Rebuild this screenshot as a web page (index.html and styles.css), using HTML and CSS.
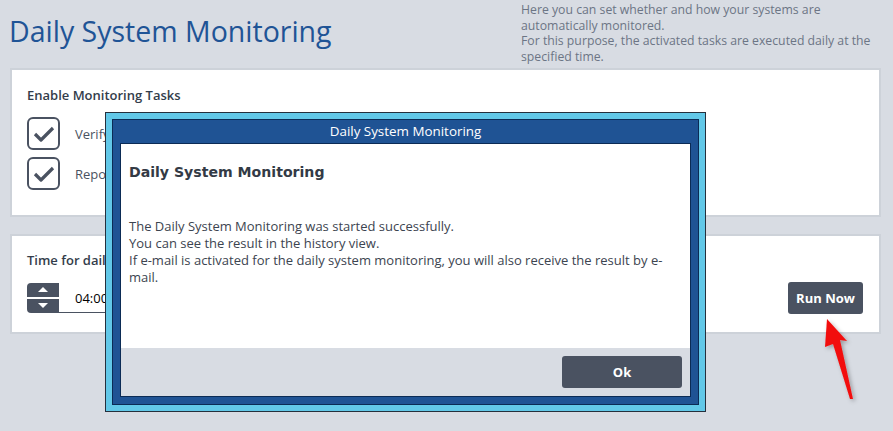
FILE: index.html
```html
<!DOCTYPE html>
<html lang="en">
<head>
    <meta charset="UTF-8">
    <meta name="viewport" content="width=device-width, initial-scale=1.0">
    <title>Daily System Monitoring</title>
    <link rel="stylesheet" href="styles.css">
</head>
<body>
    <div class="header">
        <h1>Daily System Monitoring</h1>
        <div class="intro">
            Here you can set whether and how your systems are automatically monitored.<br>
            For this purpose, the activated tasks are executed daily at the specified time.
        </div>
    </div>

    <div class="panel tasks">
        <h2>Enable Monitoring Tasks</h2>
        <div class="task">
            <svg class="check" width="33" height="33" viewBox="0 0 33 33">
                <rect x="1" y="1" width="31" height="31" rx="5" fill="none" stroke="#4a5261" stroke-width="2"/>
                <path d="M8 17 L14 23 L26 11" fill="none" stroke="#4a5261" stroke-width="3.2" stroke-linejoin="round"/>
            </svg>
            <span>Verify backup status</span>
        </div>
        <div class="task">
            <svg class="check" width="33" height="33" viewBox="0 0 33 33">
                <rect x="1" y="1" width="31" height="31" rx="5" fill="none" stroke="#4a5261" stroke-width="2"/>
                <path d="M8 17 L14 23 L26 11" fill="none" stroke="#4a5261" stroke-width="3.2" stroke-linejoin="round"/>
            </svg>
            <span>Report system status</span>
        </div>
    </div>

    <div class="panel schedule">
        <h2>Time for daily system monitoring</h2>
        <div class="schedule-row">
            <div class="spinner">
                <div class="spin-buttons">
                    <button type="button" class="spin up"></button>
                    <button type="button" class="spin down"></button>
                </div>
                <input type="text" class="time" value="04:00">
            </div>
            <button type="button" class="btn run">Run Now</button>
        </div>
    </div>

    <div class="dialog">
        <div class="dialog-frame">
            <div class="dialog-title">Daily System Monitoring</div>
            <div class="dialog-body">
                <div class="dialog-content">
                    <h3>Daily System Monitoring</h3>
                    <p>The Daily System Monitoring was started successfully.<br>
                    You can see the result in the history view.<br>
                    If e-mail is activated for the daily system monitoring, you will also receive the result by e-mail.</p>
                </div>
                <div class="dialog-footer">
                    <button type="button" class="btn ok">Ok</button>
                </div>
            </div>
        </div>
    </div>

    <svg class="arrow" width="893" height="431" viewBox="0 0 893 431">
        <defs>
            <filter id="shadow" x="-50%" y="-50%" width="200%" height="200%">
                <feDropShadow dx="2" dy="2" stdDeviation="2" flood-color="#000" flood-opacity="0.3"/>
            </filter>
        </defs>
        <polygon points="827,319 847,341 840,340 853,399 850,399 833,344 825,347" fill="#f20d0d" filter="url(#shadow)"/>
    </svg>
</body>
</html>
```

FILE: styles.css
```css
body {
    margin: 0;
    font-family: 'Open Sans', 'Noto Sans', sans-serif;
    background-color: #d8dce3;
    color: #333d4b;
    width: 893px;
    height: 431px;
    overflow: hidden;
    position: relative;
}

.header {
    display: flex;
    height: 68px;
}

h1 {
    flex: 1;
    margin: 0;
    padding: 12px 0 0 9px;
    font-size: 28.5px;
    font-weight: 400;
    color: #1f5496;
}

.intro {
    width: 372px;
    padding-top: 2px;
    font-size: 12.25px;
    line-height: 15.7px;
    color: #6c7585;
}

.panel {
    margin: 0 12px 0 10px;
    background-color: #fff;
    border: 2px solid #cdd2d9;
    padding: 0 15px;
}

.panel h2 {
    margin: 0;
    font-size: 13px;
    font-weight: 600;
    color: #333d4b;
}

.tasks {
    padding-top: 16px;
    box-sizing: border-box;
    height: 149px;
}

.tasks h2 {
    margin-bottom: 13px;
}

.task {
    display: flex;
    align-items: center;
    gap: 15px;
    margin-bottom: 7px;
    font-size: 13px;
    color: #4a5261;
}

.check {
    display: block;
}

.schedule {
    margin-top: 17px;
    height: 100px;
    box-sizing: border-box;
    padding-top: 15px;
}

.schedule h2 {
    margin-bottom: 14px;
}

.schedule-row {
    display: flex;
    justify-content: space-between;
    align-items: flex-start;
    padding-right: 1px;
}

.spinner {
    display: flex;
    height: 30px;
}

.spin-buttons {
    display: flex;
    flex-direction: column;
    gap: 2px;
    width: 32px;
}

.spin {
    flex: 1;
    border: none;
    padding: 0;
    background-color: #4a5261;
    position: relative;
}

.spin.up {
    border-radius: 4px 0 0 0;
}

.spin.down {
    border-radius: 0 0 0 4px;
}

.spin::after {
    content: "";
    position: absolute;
    left: 11px;
    top: 4px;
    border-left: 5px solid transparent;
    border-right: 5px solid transparent;
}

.spin.up::after {
    border-bottom: 5px solid #fff;
}

.spin.down::after {
    border-top: 5px solid #fff;
}

.time {
    width: 110px;
    border: none;
    border-bottom: 1px solid #4a5261;
    padding: 0 0 0 16px;
    font-family: 'Open Sans', sans-serif;
    font-size: 13px;
    color: #000;
    outline: none;
}

.btn {
    border: none;
    border-radius: 3px;
    background-color: #4a5261;
    color: #fff;
    font-family: 'Open Sans', sans-serif;
    font-weight: 700;
    font-size: 13px;
    cursor: pointer;
}

.run {
    width: 75px;
    height: 32px;
    margin-top: -1px;
}

.dialog {
    position: absolute;
    left: 105px;
    top: 112px;
    width: 601px;
    height: 300px;
    box-sizing: border-box;
    border: 1px solid #25303d;
    background-color: #62c8e8;
    padding: 6px;
}

.dialog-frame {
    height: 100%;
    box-sizing: border-box;
    border: 1px solid #0b2b55;
    background-color: #1f5394;
    padding: 0 7px 7px;
    display: flex;
    flex-direction: column;
}

.dialog-title {
    height: 23px;
    line-height: 23px;
    text-align: center;
    color: #fff;
    font-size: 13.4px;
}

.dialog-body {
    flex: 1;
    border: 1px solid #0b2b55;
    background-color: #fff;
    display: flex;
    flex-direction: column;
}

.dialog-content {
    flex: 1;
    padding: 20px 8px 0 8px;
}

.dialog-content h3 {
    margin: 0 0 38px;
    font-family: 'DejaVu Sans', Verdana, sans-serif;
    font-size: 14.1px;
    font-weight: 700;
    color: #333a45;
}

.dialog-content p {
    margin: 0;
    font-size: 13px;
    line-height: 17px;
    color: #3c4450;
}

.dialog-footer {
    height: 48px;
    box-sizing: border-box;
    background-color: #d8dce3;
    padding: 8px;
    display: flex;
    justify-content: flex-end;
}

.ok {
    width: 120px;
    height: 32px;
}

.arrow {
    position: absolute;
    left: 0;
    top: 0;
    pointer-events: none;
}
```
